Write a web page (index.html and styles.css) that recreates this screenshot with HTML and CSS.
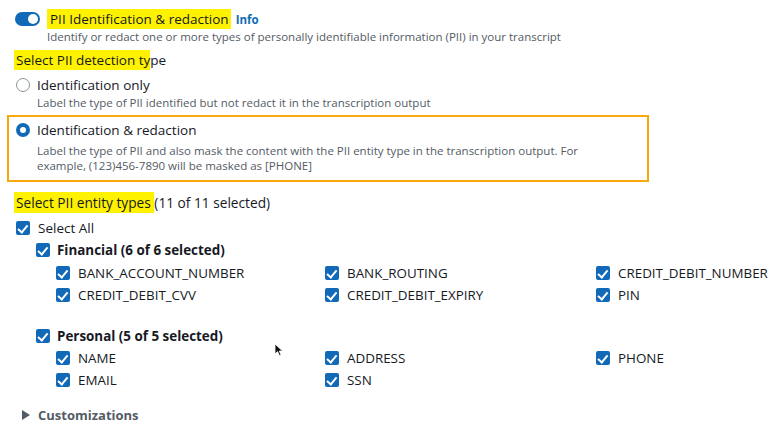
FILE: index.html
```html
<!DOCTYPE html>
<html>
<head>
<meta charset="utf-8">
<link rel="stylesheet" href="styles.css">
</head>
<body>
<div class="page">
  <div class="toggle-row">
    <span class="toggle"><span class="knob"></span></span>
    <span class="title"><mark class="hl">PII Identification &amp; redaction</mark></span>
    <a class="info">Info</a>
  </div>
  <div class="toggle-desc">Identify or redact one or more types of personally identifiable information (PII) in your transcript</div>

  <div class="label label-detect"><mark class="hl hl-tight">Select PII detection ty</mark>pe</div>

  <div class="radio-opt opt-first">
    <div class="radio-row"><span class="radio"></span><span class="radio-title">Identification only</span></div>
    <div class="radio-desc">Label the type of PII identified but not redact it in the transcription output</div>
  </div>

  <div class="radio-opt opt-boxed">
    <div class="radio-row"><span class="radio checked"></span><span class="radio-title">Identification &amp; redaction</span></div>
    <div class="radio-desc wrap">Label the type of PII and also mask the content with the PII entity type in the transcription output. For example, (123)456-7890 will be masked as [PHONE]</div>
  </div>

  <div class="label label-entity"><mark class="hl hl-tight">Select PII entity types </mark>(11 of 11 selected)</div>

  <div class="cb-row level0"><span class="cb"></span><span>Select All</span></div>

  <div class="cb-row level1 grp-fin"><span class="cb"></span><strong>Financial (6 of 6 selected)</strong></div>
  <div class="grid">
    <div class="cb-row"><span class="cb"></span><span>BANK_ACCOUNT_NUMBER</span></div>
    <div class="cb-row"><span class="cb"></span><span>BANK_ROUTING</span></div>
    <div class="cb-row"><span class="cb"></span><span>CREDIT_DEBIT_NUMBER</span></div>
    <div class="cb-row"><span class="cb"></span><span>CREDIT_DEBIT_CVV</span></div>
    <div class="cb-row"><span class="cb"></span><span>CREDIT_DEBIT_EXPIRY</span></div>
    <div class="cb-row"><span class="cb"></span><span>PIN</span></div>
  </div>

  <div class="cb-row level1 grp-per"><span class="cb"></span><strong>Personal (5 of 5 selected)</strong></div>
  <div class="grid grid-per">
    <div class="cb-row"><span class="cb"></span><span>NAME</span></div>
    <div class="cb-row"><span class="cb"></span><span>ADDRESS</span></div>
    <div class="cb-row"><span class="cb"></span><span>PHONE</span></div>
    <div class="cb-row"><span class="cb"></span><span>EMAIL</span></div>
    <div class="cb-row"><span class="cb"></span><span>SSN</span></div>
  </div>

  <div class="expander"><span class="caret"></span><span>Customizations</span></div>

  <svg class="cursor" width="10" height="14" viewBox="0 0 10 14"><path d="M1 1 L1 11 L3.6 8.6 L5.4 12.6 L7 11.9 L5.3 8 L8.6 8 Z" fill="#111" stroke="#fff" stroke-width="0.8"/></svg>
</div>
</body>
</html>
```
FILE: styles.css
```css
* { box-sizing: border-box; }
html, body { margin: 0; padding: 0; background: #fff; }
body {
  font-family: "Open Sans", "Liberation Sans", sans-serif;
  color: #16191f;
  width: 778px;
  height: 426px;
  overflow: hidden;
}
.page { position: relative; padding-top: 10px; }

.hl { background: #fff200; color: inherit; padding: 1px 2px 1px 3px; margin-left: -3px; }
.hl-tight { padding: 1px 0 1px 2px; margin-left: -2px; }

.toggle-row { display: flex; align-items: center; height: 18px; padding-left: 15px; font-size: 13.5px; }
.toggle { width: 25px; height: 14px; border-radius: 7px; background: #1169b8; display: flex; align-items: center; justify-content: flex-end; padding-right: 2px; }
.knob { width: 10px; height: 10px; border-radius: 50%; background: #fff; }
.title { margin-left: 10px; }
.info { color: #0d6cb5; font-weight: 700; font-size: 11.5px; margin-left: 5px; }
.toggle-desc { margin-left: 47px; line-height: 16px; font-size: 11.5px; color: #545b64; margin-top: 1px; }

.label { font-size: 13.5px; line-height: 18px; padding-left: 16px; }
.label-detect { margin-top: 6px; }
.label-entity { margin-top: 12px; font-size: 13.7px; }

.radio-opt { padding-left: 16px; }
.opt-first { margin-top: 7px; }
.radio-row { display: flex; align-items: center; height: 18px; font-size: 13.5px; }
.radio { width: 14px; height: 14px; border-radius: 50%; border: 1.5px solid #8d9696; background: #fff; flex: none; }
.radio.checked { border: 4px solid #1169b8; }
.radio-title { margin-left: 7px; }
.radio-desc { margin-left: 21px; font-size: 11.5px; line-height: 15px; color: #545b64; margin-top: 1px; }
.radio-desc.wrap { max-width: 565px; margin-top: 4px; }
.opt-boxed { margin: 5px 0 0 7px; width: 642px; border: 2px solid #f7a80a; padding: 4px 0 7px 7px; }

.cb-row { display: flex; align-items: center; height: 18px; font-size: 13.4px; }
.cb { width: 14px; height: 14px; border-radius: 2px; background: #1169b8; flex: none; margin-right: 8px; position: relative; }
.cb::after { content: ""; position: absolute; left: 4px; top: 1.5px; width: 4px; height: 7.5px; border: solid #fff; border-width: 0 2px 2px 0; transform: rotate(40deg); }
.level0 { padding-left: 16px; margin-top: 7px; font-size: 13.5px; }
.level1 { padding-left: 36px; margin-top: 4px; }
.level1 .cb { margin-right: 7px; }
.level1 strong { font-weight: 700; }
.grp-per { margin-top: 21px; }

.grid { display: grid; grid-template-columns: 269px 271px auto; padding-left: 56px; margin-top: 3px; }
.grid-per { margin-top: 2px; }
.grid .cb-row { height: 22px; }

.expander { display: flex; align-items: center; height: 18px; margin-top: 15px; padding-left: 22px; font-size: 13px; font-weight: 700; color: #545b64; }
.caret { width: 0; height: 0; border-left: 8px solid #545b64; border-top: 5px solid transparent; border-bottom: 5px solid transparent; margin-right: 8px; }

.cursor { position: absolute; left: 274px; top: 343px; }
```
